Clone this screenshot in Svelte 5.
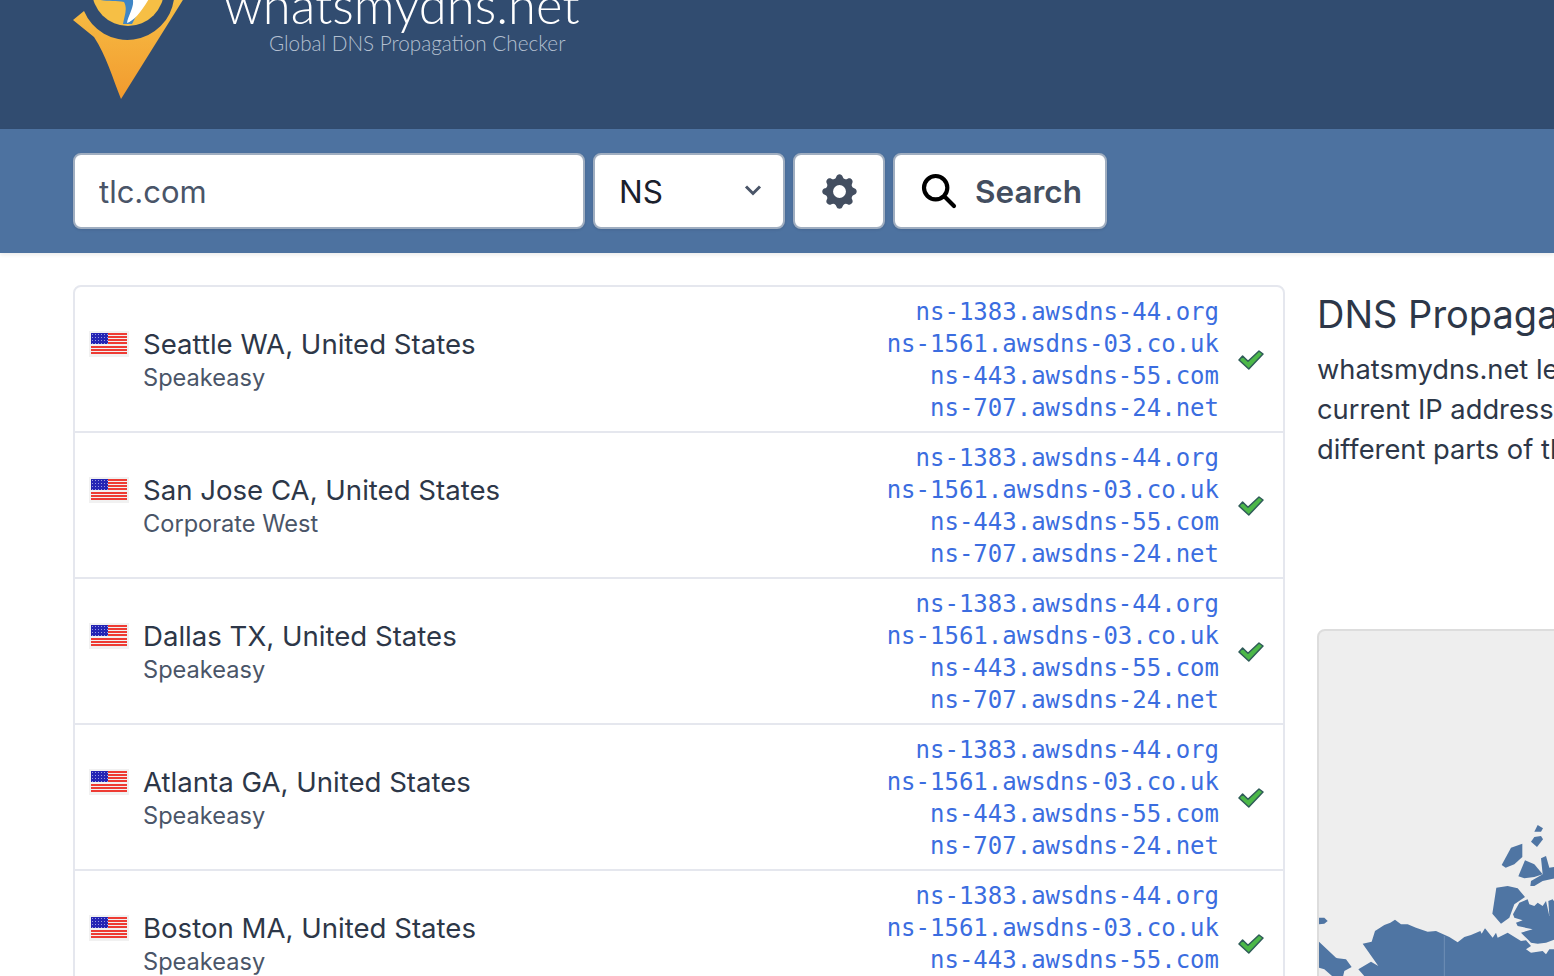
<script>
  const nameservers = [
    'ns-1383.awsdns-44.org',
    'ns-1561.awsdns-03.co.uk',
    'ns-443.awsdns-55.com',
    'ns-707.awsdns-24.net'
  ];

  const locations = [
    { city: 'Seattle WA, United States', provider: 'Speakeasy' },
    { city: 'San Jose CA, United States', provider: 'Corporate West' },
    { city: 'Dallas TX, United States', provider: 'Speakeasy' },
    { city: 'Atlanta GA, United States', provider: 'Speakeasy' },
    { city: 'Boston MA, United States', provider: 'Speakeasy' }
  ];

  const stripes = [0, 1, 2, 3, 4, 5, 6];
</script>

<div class="page">
  <header>
    <div class="brand">
      <svg class="logo" viewBox="0 0 120 104" aria-hidden="true">
        <defs>
          <linearGradient id="pin" x1="0" y1="0" x2="0" y2="1">
            <stop offset="0" stop-color="#f7c046" />
            <stop offset="1" stop-color="#f29a2e" />
          </linearGradient>
        </defs>
        <path fill="url(#pin)" d="M3 21 14 12A47 47 0 0 0 104 0V-4H116L51 100C43 80 36 56 24 38Z" />
        <circle cx="58" cy="-9" r="36" fill="#f6bf45" />
        <path fill="#3f86c6" d="M22 -2C34 4 44 1 54 3 58 10 54 18 53 25H62L76 -2Z" />
        <path fill="#fff" d="M62 -2C66 6 58 16 57 24 64 22 72 12 80 -2Z" />
      </svg>
      <div class="wordmark">
        <div class="site">whatsmydns.net</div>
        <div class="tagline">Global DNS Propagation Checker</div>
      </div>
    </div>
  </header>

  <form class="searchbar" onsubmit={(e) => e.preventDefault()}>
    <input class="domain" value="tlc.com" />
    <div class="field select">
      <span>NS</span>
      <svg viewBox="0 0 20 14" class="chevron" aria-hidden="true"><path d="M3 3.500 10 10.500 17 3.500" /></svg>
    </div>
    <button type="button" class="field gear" aria-label="Settings">
      <svg viewBox="0 0 20 20" aria-hidden="true">
        <path fill-rule="evenodd" d="M11.49 3.17c-.38-1.56-2.6-1.56-2.98 0a1.532 1.532 0 01-2.286.948c-1.372-.836-2.942.734-2.106 2.106.54.886.061 2.042-.947 2.287-1.561.379-1.561 2.6 0 2.978a1.532 1.532 0 01.947 2.287c-.836 1.372.734 2.942 2.106 2.106a1.532 1.532 0 012.287.947c.379 1.561 2.6 1.561 2.978 0a1.533 1.533 0 012.287-.947c1.372.836 2.942-.734 2.106-2.106a1.533 1.533 0 01.947-2.287c1.561-.379 1.561-2.6 0-2.978a1.532 1.532 0 01-.947-2.287c.836-1.372-.734-2.942-2.106-2.106a1.532 1.532 0 01-2.287-.947zM10 13a3 3 0 100-6 3 3 0 000 6z" />
      </svg>
    </button>
    <button type="submit" class="field search">
      <svg viewBox="0 0 24 24" aria-hidden="true"><path d="M21 21l-6-6m2-5a7 7 0 11-14 0 7 7 0 0114 0z" /></svg>
      <span>Search</span>
    </button>
  </form>

  <main>
    <section class="results">
      {#each locations as loc}
        <div class="row">
          <div class="flag" aria-hidden="true">
            {#each stripes as s}
              <i class:first={s === 0}></i>
            {/each}
            <b></b>
          </div>
          <div class="place">
            <div class="city">{loc.city}</div>
            <div class="provider">{loc.provider}</div>
          </div>
          <div class="records">
            {#each nameservers as ns}
              <div>{ns}</div>
            {/each}
          </div>
          <svg class="check" viewBox="0 0 26 20" aria-hidden="true">
            <path d="M1 10 4.600 6 10 11.200 21 1 25 4 10.800 19Z" />
          </svg>
        </div>
      {/each}
    </section>

    <aside>
      <h2>DNS Propagation Checker</h2>
      <p>
        whatsmydns.net lets you instantly perform a DNS lookup to check a domain name's<br />
        current IP address and DNS record information against multiple nameservers located in<br />
        different parts of the world.
      </p>
      <div class="map">
        <svg viewBox="54 30 708 1041" aria-hidden="true">
          <polygon points="700,632 710,612 726,622 720,632" />
          <polygon points="690,662 700,648 720,645 726,655 708,678" />
          <polygon points="602,732 630,680 664,668 664,708 640,730 614,740" />
          <polygon points="652,766 672,718 700,730 725,760 700,768 670,772" />
          <polygon points="688,795 690,780 725,760 720,712 735,705 745,740 762,738 762,772 725,780 700,795" />
          <polygon points="574,878 586,800 620,795 650,802 672,828 640,850 625,890 600,908" />
          <polygon points="636,880 655,845 680,835 685,850 700,855 710,845 725,855 735,840 745,885 742,840 755,835 762,845 762,955 735,965 710,968 690,965 680,955 660,935 695,925 650,915 645,905 665,898 640,890" />
          <polygon points="185,968 212,962 222,930 250,912 268,905 282,896 300,910 320,910 345,920 380,932 405,930 445,948 470,964 490,948 510,942 538,930 542,938 552,922 575,950 585,935 590,950 620,935 660,960 675,958 690,975 675,985 690,995 725,990 735,1000 745,985 762,985 762,1071 195,1071 172,1045 210,1022 232,1035" />
          <polygon points="54,962 105,1010 110,1012 135,1015 152,1038 130,1050 125,1071 100,1071 70,1045 54,1040" />
          <polygon points="54,890 70,890 80,900 70,908 54,910" />
          <line x1="430" y1="945" x2="430" y2="1071" />
        </svg>
      </div>
    </aside>
  </main>
</div>

<style>
  :global(body) {
    margin: 0;
    overflow: hidden;
  }

  .page {
    width: 1554px;
    height: 976px;
    overflow: hidden;
    font-family: Inter, "Noto Sans", sans-serif;
    background: #fff;
  }

  header {
    height: 129px;
    background: #314c70;
    padding-left: 73px;
    overflow: hidden;
  }

  .brand {
    display: flex;
    margin-top: -1px;
  }

  .logo {
    width: 120px;
    height: 104px;
    margin-left: -3px;
    flex: none;
    overflow: visible;
  }

  .wordmark {
    margin-left: 34px;
    color: #fff;
    font-family: Lato, sans-serif;
    font-weight: 300;
  }

  .site {
    font-size: 50.700px;
    line-height: 50px;
    margin-top: -19px;
    white-space: nowrap;
  }

  .tagline {
    font-size: 20.700px;
    line-height: 24px;
    margin-left: 45px;
    margin-top: 1px;
    color: #b4c0d0;
    white-space: nowrap;
  }

  .searchbar {
    height: 124px;
    box-sizing: border-box;
    background: #4d72a0;
    padding: 24px 73px;
    display: flex;
    gap: 8px;
    box-shadow: 0 2px 4px rgba(0, 0, 0, 0.08);
    position: relative;
  }

  .domain,
  .field {
    height: 76px;
    box-sizing: border-box;
    border: 2px solid #a0aec0;
    border-radius: 8px;
    background: #fff;
    font-family: inherit;
    font-size: 31.500px;
    box-shadow: 0 1px 3px rgba(0, 0, 0, 0.1);
  }

  .domain {
    width: 512px;
    padding: 0 24px;
    color: #4a5568;
    font-size: 31px;
    outline: none;
  }

  .select {
    width: 192px;
    padding: 0 20px 0 24px;
    display: flex;
    align-items: center;
    justify-content: space-between;
    color: #1a202c;
  }

  .chevron {
    width: 20px;
    height: 14px;
    margin-top: -2px;
    fill: none;
    stroke: #4a5568;
    stroke-width: 3;
  }

  .gear {
    width: 92px;
    padding: 0;
    display: flex;
    align-items: center;
    justify-content: center;
  }

  .gear svg {
    width: 43px;
    height: 43px;
    fill: #434e60;
  }

  .search {
    width: 214px;
    padding: 0 0 0 24px;
    display: flex;
    align-items: center;
    gap: 16px;
    color: #434e60;
    font-weight: 600;
  }

  .search svg {
    width: 40px;
    height: 40px;
    fill: none;
    stroke: #000;
    stroke-width: 2.500;
    stroke-linecap: round;
    stroke-linejoin: round;
  }

  main {
    display: grid;
    grid-template-columns: 1212px 700px;
    gap: 32px;
    padding: 32px 0 0 73px;
  }

  .results {
    border: 2px solid #e5e7ee;
    border-radius: 8px;
  }

  .row {
    height: 146px;
    box-sizing: border-box;
    display: flex;
    align-items: center;
    padding: 2px 19px 0 14px;
    border-bottom: 2px solid #e5e7ee;
  }

  .flag {
    width: 40px;
    height: 26px;
    box-sizing: border-box;
    padding: 2px;
    background: #f1f1f1;
    margin-bottom: 33px;
    position: relative;
    flex: none;
    display: flex;
    flex-direction: column;
    justify-content: space-between;
  }

  .flag i {
    display: block;
    height: 2px;
    background: #ee3b33;
  }

  .flag b {
    position: absolute;
    left: 2px;
    top: 2px;
    width: 17px;
    height: 11px;
    background: #2424b4 radial-gradient(circle, #9a9ae0 0.6px, transparent 0.9px) 0 0 / 3px 3px;
  }

  .place {
    margin-left: 14px;
    white-space: nowrap;
  }

  .city {
    font-size: 27.600px;
    line-height: 36px;
    color: #2d3748;
  }

  .provider {
    font-size: 23.600px;
    line-height: 32px;
    color: #4a5568;
  }

  .records {
    margin-left: auto;
    text-align: right;
    font-family: "DejaVu Sans Mono", monospace;
    font-size: 24px;
    line-height: 32px;
    color: #3b6de0;
  }

  .check {
    width: 26px;
    height: 20px;
    margin-left: 19px;
    fill: #4cb848;
    stroke: #2f5c58;
    stroke-width: 1.500;
    stroke-linejoin: round;
    flex: none;
  }

  aside {
    color: #2d3748;
  }

  h2 {
    margin: 5px 0 0;
    font-size: 38px;
    line-height: 48px;
    font-weight: 400;
    white-space: nowrap;
  }

  p {
    margin: 12px 0 0;
    font-size: 27.300px;
    line-height: 40px;
    white-space: nowrap;
  }

  .map {
    margin-top: 159px;
    height: 600px;
    box-sizing: border-box;
    background: #eee;
    border: 2px solid #ddd;
    border-radius: 8px;
  }

  .map svg {
    display: block;
    width: 236px;
    height: 347px;
    fill: #4f75a3;
  }

  .map line {
    stroke: #6f8fb5;
    stroke-width: 3;
  }
</style>
